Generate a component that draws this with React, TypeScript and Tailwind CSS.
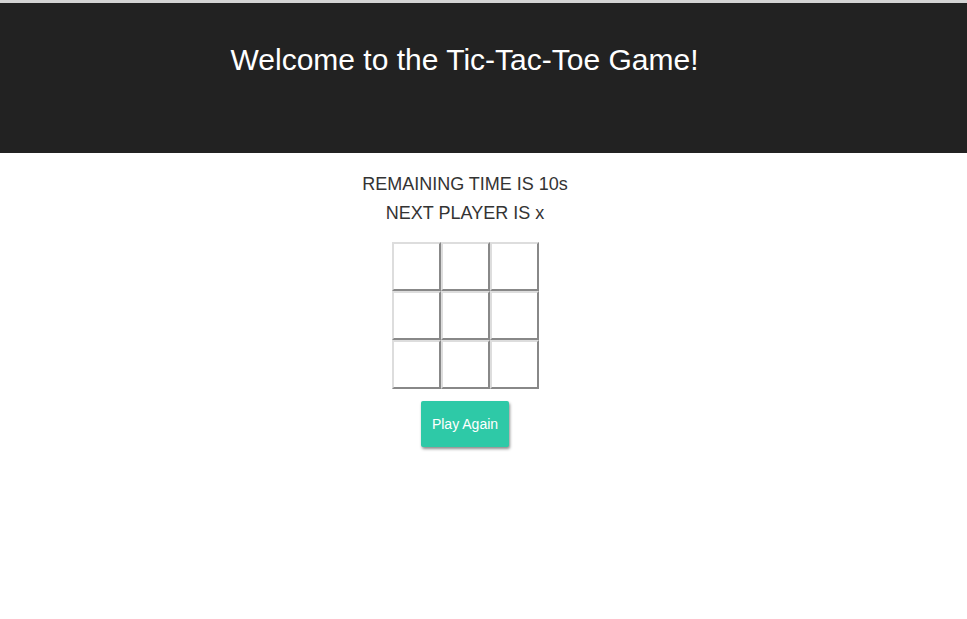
import { useState } from "react";

export default function App() {
  const [cells] = useState<string[]>(Array(9).fill(""));

  return (
    <div className="min-h-screen bg-white font-['Liberation_Sans',Arial,sans-serif]">
      {/* Header */}
      <header className="border-t-[3px] border-[#d4d4d4] bg-[#222222] h-[153px]">
        <div className="w-[929px] pt-[40px] text-center">
          <h1 className="text-[30px] leading-[34px] text-white">Welcome to the Tic-Tac-Toe Game!</h1>
        </div>
      </header>

      {/* Game */}
      <main className="w-[930px] flex flex-col items-center pt-[17px]">
        <p className="text-[18px] leading-[29px] text-[#333333]">REMAINING TIME IS 10s</p>
        <p className="text-[18px] leading-[29px] text-[#333333]">NEXT PLAYER IS x</p>

        <div className="mt-[14px] grid grid-cols-[repeat(3,49px)] grid-rows-[repeat(3,49px)]">
          {cells.map((c, i) => (
            <button
              key={i}
              className="w-[49px] h-[49px] bg-white border-2 border-t-[#dddddd] border-l-[#dddddd] border-r-[#888888] border-b-[#888888] text-2xl"
            >
              {c}
            </button>
          ))}
        </div>

        <button className="mt-[12px] w-[88px] h-[46px] rounded-[2px] bg-[#2ec9a7] text-white text-[14px] shadow-[1px_2px_3px_rgba(0,0,0,0.45)]">
          Play Again
        </button>
      </main>
    </div>
  );
}
